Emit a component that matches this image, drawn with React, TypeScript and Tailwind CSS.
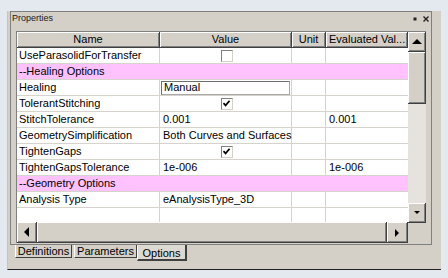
import React from 'react';

type Row = {
  name: string;
  kind?: 'check' | 'group' | 'edit';
  checked?: boolean;
  value?: string;
  evaluated?: string;
};

const rows: Row[] = [
  { name: 'UseParasolidForTransfer', kind: 'check', checked: false },
  { name: '--Healing Options', kind: 'group' },
  { name: 'Healing', kind: 'edit', value: 'Manual' },
  { name: 'TolerantStitching', kind: 'check', checked: true },
  { name: 'StitchTolerance', value: '0.001', evaluated: '0.001' },
  { name: 'GeometrySimplification', value: 'Both Curves and Surfaces' },
  { name: 'TightenGaps', kind: 'check', checked: true },
  { name: 'TightenGapsTolerance', value: '1e-006', evaluated: '1e-006' },
  { name: '--Geometry Options', kind: 'group' },
  { name: 'Analysis Type', value: 'eAnalysisType_3D' },
];

const raised =
  'bg-[#d4d0c8] border-r border-b border-r-[#404040] border-b-[#404040] shadow-[inset_1px_1px_#ffffff,inset_-1px_-1px_#808080]';

const Arrow = ({ dir }: { dir: 'up' | 'down' | 'left' | 'right' }) => {
  const pts = {
    up: '1,6 6,1 11,6',
    down: '3,2 9,2 6,5',
    left: '5,0 5,10 0,5',
    right: '1,2 1,10 5,6',
  }[dir];
  const size = dir === 'up' ? [12, 7] : dir === 'down' ? [12, 7] : [6, 11];
  return (
    <svg width={size[0]} height={size[1]} viewBox={`0 0 ${size[0]} ${size[1]}`}>
      <polygon points={pts} fill="#000" />
    </svg>
  );
};

const CheckBox = ({ checked }: { checked?: boolean }) => (
  <div className="w-[12px] h-[12px] bg-white border border-t-[#808080] border-l-[#808080] border-r-[#d4d0c8] border-b-[#d4d0c8] flex items-center justify-center">
    {checked && (
      <svg width="9" height="9" viewBox="0 0 9 9">
        <path d="M1.5 4.2 L3.6 6.4 L7.6 1.8" stroke="#000" strokeWidth="1.7" fill="none" />
      </svg>
    )}
  </div>
);

const line = 'border-[#d6d3ce]';

const App = () => {
  return (
    <div className="w-[448px] h-[278px] overflow-hidden bg-[#e4e9ef] pt-[11px] pl-[7px] font-['Liberation_Sans',Arial,sans-serif] text-[11px] text-black leading-none">
      <div className="w-[434px] h-[259px] bg-[#d4d0c8] border-l border-l-[#c4c4c4] border-b border-b-[#222222] pl-[2px]">
        {/* frame */}
        <div className="w-[422px] h-[234px] border border-[#808080] flex flex-col">
          {/* title bar */}
          <div className="h-[13px] flex items-center justify-between pl-[1px] pr-[1px]">
            <span className="text-[9px] text-[#202020]">Properties</span>
            <div className="flex items-center gap-[6px] pr-[1px]">
              <svg width="4" height="4" viewBox="0 0 4 4">
                <rect x="0.5" y="0.5" width="3" height="3" fill="#222" />
              </svg>
              <svg width="6" height="6" viewBox="0 0 6 6">
                <path d="M0.5 0.5 L5.5 5.5 M5.5 0.5 L0.5 5.5" stroke="#222" strokeWidth="1.4" />
              </svg>
            </div>
          </div>
          {/* body */}
          <div className="pl-[5px] pt-[6px]">
            <div className="w-[410px] h-[212px] border-l border-t border-[#808080] flex">
              <div className="w-[391px] flex flex-col">
                <div className="h-[191px] bg-white flex flex-col">
                  {/* header */}
                  <div className="h-[16px] flex">
                    <div className={`w-[143px] ${raised} flex items-center justify-center`}>Name</div>
                    <div className={`w-[132px] ${raised} flex items-center justify-center`}>Value</div>
                    <div className={`w-[34px] ${raised} flex items-center justify-center`}>Unit</div>
                    <div className={`w-[82px] ${raised} flex items-center pl-[3px]`}>Evaluated Val...</div>
                  </div>
                  {rows.map((r) =>
                    r.kind === 'group' ? (
                      <div key={r.name} className={`h-[16px] bg-[#ffc2ff] border-b ${line} flex items-center pl-[2px]`}>
                        {r.name}
                      </div>
                    ) : (
                      <div key={r.name} className={`h-[16px] flex border-b ${line}`}>
                        <div className={`w-[143px] border-r ${line} flex items-center pl-[2px]`}>{r.name}</div>
                        <div className={`w-[132px] border-r ${line} flex items-center`}>
                          {r.kind === 'check' && (
                            <div className="w-full flex justify-center pl-[2px]">
                              <CheckBox checked={r.checked} />
                            </div>
                          )}
                          {r.kind === 'edit' && (
                            <div className="ml-[1px] w-[129px] h-[14px] border border-[#6f6f6f] border-r-[#a8a8a8] border-b-[#a8a8a8] flex items-center pl-[2px]">
                              {r.value}
                            </div>
                          )}
                          {!r.kind && <span className="pl-[3px] whitespace-nowrap">{r.value}</span>}
                        </div>
                        <div className={`w-[34px] border-r ${line}`} />
                        <div className={`w-[82px] flex items-center pl-[3px]`}>{r.evaluated}</div>
                      </div>
                    )
                  )}
                  <div className="flex-1 flex">
                    <div className={`w-[143px] border-r ${line}`} />
                    <div className={`w-[132px] border-r ${line}`} />
                    <div className={`w-[34px] border-r ${line}`} />
                    <div className="w-[82px]" />
                  </div>
                </div>
                {/* horizontal scrollbar */}
                <div className="h-[21px] flex">
                  <div className={`w-[20px] ${raised} flex items-center justify-center`}>
                    <Arrow dir="left" />
                  </div>
                  <div className={`flex-1 ${raised}`} />
                  <div className={`w-[21px] ${raised} flex items-center justify-center`}>
                    <Arrow dir="right" />
                  </div>
                </div>
              </div>
              {/* vertical scrollbar */}
              <div className="w-[19px] flex flex-col">
                <div className="h-[191px] flex flex-col bg-[#e6e3de]">
                  <div className={`h-[20px] ${raised} flex items-center justify-center`}>
                    <Arrow dir="up" />
                  </div>
                  <div className={`h-[52px] ${raised}`} />
                  <div className="flex-1" />
                  <div className={`h-[20px] ${raised} flex items-center justify-center`}>
                    <Arrow dir="down" />
                  </div>
                </div>
                <div className="flex-1 bg-[#d4d0c8]" />
              </div>
            </div>
          </div>
        </div>
        {/* tabs */}
        <div className="flex items-start pl-[5px]">
          <div className="h-[13px] w-[57px] border-l border-l-[#ffffff] border-r border-b border-r-[#404040] border-b-[#404040] flex items-center justify-center">
            Definitions
          </div>
          <div className="ml-[2px] h-[13px] w-[63px] border-l border-l-[#ffffff] border-r border-b border-r-[#404040] border-b-[#404040] flex items-center justify-center">
            Parameters
          </div>
          <div className="h-[16px] w-[50px] bg-[#dcd9d2] border-l border-l-[#ffffff] border-r-2 border-b-2 border-r-[#404040] border-b-[#404040] flex items-center justify-center pt-[2px]">
            Options
          </div>
        </div>
      </div>
    </div>
  );
};

export default App;
